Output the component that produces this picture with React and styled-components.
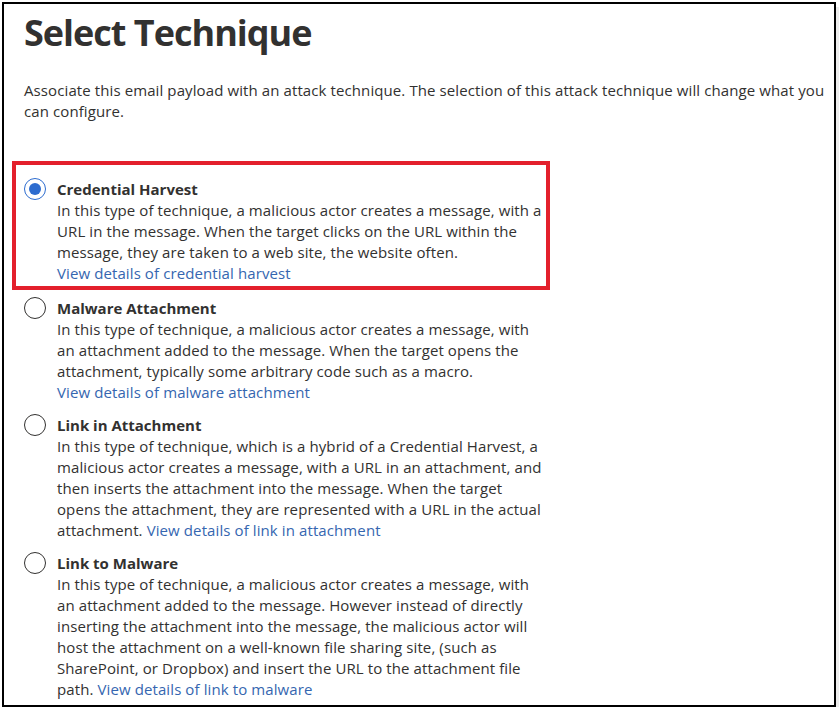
import React from 'react';
import styled, {createGlobalStyle} from "styled-components";

const GlobalStyle = createGlobalStyle`
  html, body {
    margin: 0;
    padding: 0;
    background: #ffffff;
  }
  body {
    font-family: "Open Sans", "Noto Sans", "Liberation Sans", sans-serif;
    color: #323130;
  }
`

const Frame = styled.div`
  margin: 2px 0 0 2px;
  width: 834px;
  height: 705px;
  border: 2px solid #000;
  padding: 0 4px 0 20px;
  box-sizing: border-box;
  box-shadow: 4px 4px 0 -1px #ececec;
  overflow: hidden;
`

const Title = styled.h1`
  margin: 3px 0 0;
  font-family: "Open Sans", "Noto Sans", sans-serif;
  font-size: 36px;
  font-weight: 700;
  line-height: 52px;
  color: #323130;
  letter-spacing: -1px;
`

const Intro = styled.p`
  margin: 21px 0 0;
  font-size: 15px;
  line-height: 21px;
  letter-spacing: 0.1px;
`

const List = styled.div`
  margin-top: 39px;
  display: flex;
  flex-direction: column;
  gap: 12px;
`

const Option = styled.div`
  display: flex;
  gap: 11px;
  ${({highlight}) => highlight && `
    margin: 0 0 -4px -12px;
    width: 538px;
    box-sizing: border-box;
    border: 4px solid #e3202c;
    padding: 14px 0 2px 8px;
  `}
`

const Radio = styled.span`
  flex: none;
  width: 22px;
  height: 22px;
  margin-top: -1px;
  border-radius: 50%;
  box-sizing: border-box;
  border: 1px solid ${({checked}) => checked ? '#2d6ccf' : '#323130'};
  display: flex;
  align-items: center;
  justify-content: center;
  &::after {
    content: "";
    display: ${({checked}) => checked ? 'block' : 'none'};
    width: 12px;
    height: 12px;
    border-radius: 50%;
    background: #2d6ccf;
  }
`

const Body = styled.div`
  width: 490px;
  font-size: 15px;
  line-height: 21px;
  letter-spacing: 0.1px;
`

const Name = styled.div`
  font-weight: 700;
  letter-spacing: 0;
`

const Desc = styled.span``

const DetailsLink = styled.a`
  color: #3566b0;
  text-decoration: none;
  cursor: pointer;
`

const TECHNIQUES = [
    {
        name: 'Credential Harvest',
        desc: 'In this type of technique, a malicious actor creates a message, with a URL in the message. When the target clicks on the URL within the message, they are taken to a web site, the website often.',
        link: 'View details of credential harvest',
        block: true,
        checked: true,
    },
    {
        name: 'Malware Attachment',
        desc: 'In this type of technique, a malicious actor creates a message, with an attachment added to the message. When the target opens the attachment, typically some arbitrary code such as a macro.',
        link: 'View details of malware attachment',
        block: true,
    },
    {
        name: 'Link in Attachment',
        desc: 'In this type of technique, which is a hybrid of a Credential Harvest, a malicious actor creates a message, with a URL in an attachment, and then inserts the attachment into the message. When the target opens the attachment, they are represented with a URL in the actual attachment.',
        link: 'View details of link in attachment',
    },
    {
        name: 'Link to Malware',
        desc: 'In this type of technique, a malicious actor creates a message, with an attachment added to the message. However instead of directly inserting the attachment into the message, the malicious actor will host the attachment on a well-known file sharing site, (such as SharePoint, or Dropbox) and insert the URL to the attachment file path.',
        link: 'View details of link to malware',
    },
]

const App = () => {
    return (
        <>
            <GlobalStyle/>
            <Frame>
                <Title>Select Technique</Title>
                <Intro>
                    Associate this email payload with an attack technique. The selection of this attack technique will change what you can configure.
                </Intro>
                <List>
                    {
                        TECHNIQUES.map((t) => (
                            <Option key={t.name} highlight={t.checked}>
                                <Radio checked={t.checked}/>
                                <Body>
                                    <Name>{t.name}</Name>
                                    <Desc>{t.desc} </Desc>
                                    {t.block ? <br/> : null}
                                    <DetailsLink>{t.link}</DetailsLink>
                                </Body>
                            </Option>
                        ))
                    }
                </List>
            </Frame>
        </>
    );
};

export default App;
